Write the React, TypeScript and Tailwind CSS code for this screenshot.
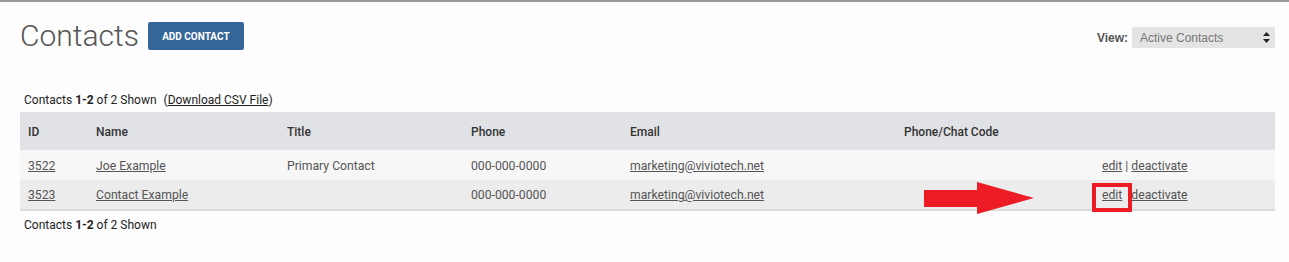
import React from "react";

const rows = [
  { id: "3522", name: "Joe Example", title: "Primary Contact", phone: "000-000-0000", email: "marketing@viviotech.net" },
  { id: "3523", name: "Contact Example", title: "", phone: "000-000-0000", email: "marketing@viviotech.net" },
];

function Shown() {
  return (
    <span>
      Contacts <span className="font-bold">1-2</span> of 2 Shown
    </span>
  );
}

export default function App() {
  return (
    <div className="min-h-[262px] w-[1289px] bg-[#fdfdfd] border-t-2 border-[#9a9a9a] font-['Roboto',sans-serif] text-[12px]">
      <div className="mt-[14px] h-[40px] flex items-center justify-between pl-[20px] pr-[14px]">
        <div className="flex items-center">
          <h1 className="text-[30px] font-light text-[#555] leading-none">Contacts</h1>
          <button className="ml-[9px] h-[28px] w-[96px] rounded-[2px] bg-[#35669a] text-white text-[10px] font-bold uppercase">
            Add Contact
          </button>
        </div>
        <div className="flex items-center mt-[3px] font-['Liberation_Sans',Arial,sans-serif]">
          <span className="font-bold text-[#555] mr-[4px]">View:</span>
          <div className="w-[143px] h-[21px] rounded-[2px] bg-[#e4e4e4] flex items-center justify-between pl-[8px] pr-[5px] text-[#777] text-[12px]">
            <span>Active Contacts</span>
            <svg width="7" height="11" viewBox="0 0 7 11">
              <path d="M3.5 0 L7 4 L0 4 Z M0 7 L7 7 L3.5 11 Z" fill="#222" />
            </svg>
          </div>
        </div>
      </div>

      <div className="mt-[36px] pl-[24px] h-[16px] leading-[16px] text-[#222]">
        <Shown />{"  "}
        <span className="ml-[4px]">
          (<a className="underline">Download CSV File</a>)
        </span>
      </div>

      <div className="relative ml-[20px] mt-[4px] w-[1255px]">
        <table className="w-full table-fixed border-collapse border-b-2 border-[#dcdcdc]">
          <colgroup>
            <col className="w-[68px]" />
            <col className="w-[191px]" />
            <col className="w-[184px]" />
            <col className="w-[159px]" />
            <col className="w-[274px]" />
            <col className="w-[198px]" />
            <col className="w-[181px]" />
          </colgroup>
          <thead>
            <tr className="h-[38px] bg-[#e1e2e6] text-left text-[#333]">
              <th className="pl-[8px] pt-[2px] font-medium">ID</th>
              <th className="pl-[8px] pt-[2px] font-medium">Name</th>
              <th className="pl-[8px] pt-[2px] font-medium">Title</th>
              <th className="pl-[8px] pt-[2px] font-medium">Phone</th>
              <th className="pl-[8px] pt-[2px] font-medium">Email</th>
              <th className="pl-[8px] pt-[2px] font-medium">Phone/Chat Code</th>
              <th className="pl-[8px] pt-[2px] font-medium"></th>
            </tr>
          </thead>
          <tbody className="text-[#555] text-[12.2px]">
            {rows.map((r, i) => (
              <tr key={r.id} className={i === 0 ? "h-[30px] bg-[#f7f7f7]" : "h-[30px] bg-[#ececec]"}>
                <td className="pl-[8px] pt-[2px]"><a className="underline">{r.id}</a></td>
                <td className="pl-[8px] pt-[2px]"><a className="underline">{r.name}</a></td>
                <td className="pl-[8px] pt-[2px]">{r.title}</td>
                <td className="pl-[8px] pt-[2px]">{r.phone}</td>
                <td className="pl-[8px] pt-[2px]"><a className="underline">{r.email}</a></td>
                <td className="pl-[8px] pt-[2px]"></td>
                <td className="pl-[8px] pt-[2px]">
                  <a className="underline">edit</a>{" "}
                  <span className={i === 1 ? "invisible" : ""}>|</span>{" "}
                  <a className="underline">deactivate</a>
                </td>
              </tr>
            ))}
          </tbody>
        </table>

        {/* annotation: arrow + highlight box */}
        <svg className="absolute left-[904px] top-[70px]" width="111" height="32" viewBox="0 0 111 32">
          <polygon points="0,8 53,8 53,0 110,16 53,32 53,25 0,25" fill="#ed1c24" />
        </svg>
        <div className="absolute left-[1072px] top-[71px] w-[40px] h-[29px] border-[4px] border-[#ed1c24]" />
      </div>

      <div className="mt-[6px] pl-[24px] h-[16px] leading-[16px] text-[#222]">
        <Shown />
      </div>
    </div>
  );
}
